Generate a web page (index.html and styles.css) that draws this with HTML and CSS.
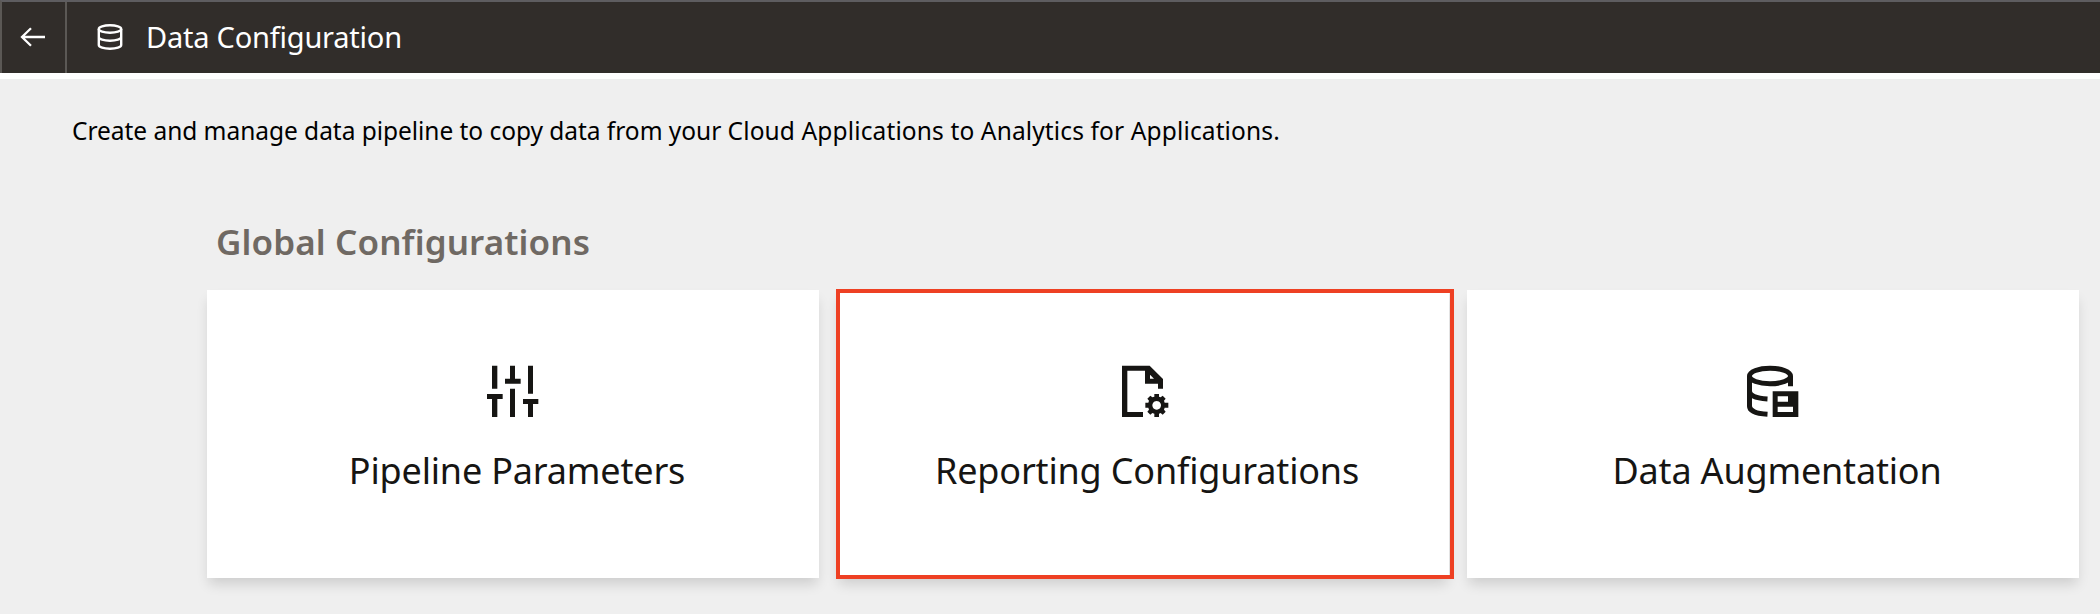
FILE: index.html
```html
<!DOCTYPE html>
<html lang="en">
<head>
<meta charset="utf-8">
<title>Data Configuration</title>
<link rel="stylesheet" href="styles.css">
</head>
<body>
<header class="topbar">
  <button class="back" aria-label="Back">
    <svg width="26" height="20" viewBox="0 0 26 20" fill="none" stroke="currentColor" stroke-width="2.3"><path d="M25 10H2M11 1.2L2 10l9 8.8"/></svg>
  </button>
  <svg class="db" width="26" height="26" viewBox="0 0 26 26" fill="none" stroke="currentColor" stroke-width="2.4"><ellipse cx="13" cy="5" rx="11.2" ry="3.7"/><path d="M1.8 5v16c0 2.2 5 3.8 11.2 3.8S24.200 23.200 24.200 21V5M1.800 13c0 2.200 5 3.800 11.200 3.800s11.200-1.600 11.200-3.800"/></svg>
  <h1 class="title">Data Configuration</h1>
</header>
<main class="page">
  <p class="intro"><span class="lead">Create and manage data pipeline to copy data from your </span>Cloud Applications to Analytics for Applications.</p>
  <h2 class="section">Global Configurations</h2>
  <div class="cards">
    <a class="card">
      <svg class="icon" viewBox="48 45 162 162"><path d="M66 47h16v69H66zM51 132h47v15H82v54H66v-54H51zM120 47h15v39h17v15h-47V86h15zM120 116h15v85h-15zM174 47h15v84h-15zM159 147h46v15h-16v39h-15v-39h-15z"/></svg>
      <span class="label">Pipeline Parameters</span>
    </a>
    <a class="card selected">
      <svg class="icon" viewBox="48 45 162 162"><path fill-rule="evenodd" d="M66 47h83l40 40v29h-15v-15h-39V62H82v124h47v15H66zM150 74v12h12z"/><path fill-rule="evenodd" d="M163 132h14v8l5 2 6-5 9 9-5 6 2 6h11v15h-11l-2 6 5 6-9 9-6-5-5 2v10h-14v-10l-6-2-6 5-9-9 5-6-2-6h-9v-15h9l2-6-5-6 9-9 6 5 6-2zM170 153a13 13 0 1 0 .01 0z"/></svg>
      <span class="label">Reporting Configurations</span>
    </a>
    <a class="card">
      <svg class="icon" viewBox="48 45 162 162"><g fill="none" stroke="#161513" stroke-width="15"><ellipse cx="120" cy="78" rx="61.500" ry="23.500"/><path d="M181.500 78v31M58.500 78v91c0 13 20 22 54 24M58.500 124c0 13 20 21 54 23"/></g><path fill-rule="evenodd" d="M128 124h77v77h-77zM143 139v16h31v-16zM143 170v16h46v-16z"/></svg>
      <span class="label">Data Augmentation</span>
    </a>
  </div>
</main>
</body>
</html>
```
FILE: styles.css
```css
* { box-sizing: border-box; }
body {
  margin: 0;
  height: 614px;
  overflow: hidden;
  background: #efefef;
  color: #161513;
  font-family: "Noto Sans", "Open Sans", sans-serif;
}
.topbar {
  display: flex;
  align-items: center;
  height: 73px;
  margin-bottom: 6px;
  border-top: 2px solid #5e5d60;
  border-left: 2px solid #5b5855;
  background: #312d2a;
  box-shadow: 0 6px 0 #fff;
  color: #fff;
}
.back {
  display: flex;
  align-items: center;
  align-self: stretch;
  width: 65px;
  padding: 0 0 2px 18px;
  border: 0;
  border-right: 2px solid #5b5855;
  background: none;
  color: inherit;
}
.db { margin: 0 0 2px 30px; }
.title {
  margin: 0 0 1px 23px;
  font-size: 29px;
  font-weight: 400;
  line-height: 40px;
  letter-spacing: -.22px;
  white-space: nowrap;
}
.page { padding-left: 72px; }
.intro {
  margin: 0;
  padding-top: 34px;
  font-size: 24.500px;
  line-height: 36px;
  letter-spacing: .13px;
  color: #000;
  white-space: nowrap;
}
.lead { letter-spacing: -.04px; }
.section {
  margin: 68px 0 0 144px;
  font-size: 35px;
  font-weight: 600;
  line-height: 50px;
  letter-spacing: .1px;
  color: #6f6963;
  white-space: nowrap;
}
.cards {
  display: grid;
  grid-template-columns: repeat(3, 612px);
  gap: 18px;
  margin: 23px 0 0 135px;
}
.card {
  position: relative;
  display: flex;
  flex-direction: column;
  align-items: center;
  height: 288px;
  padding-top: 75px;
  background: #fff;
  box-shadow: 0 8px 12px -2px rgba(0, 0, 0, .14);
}
.selected::after {
  content: "";
  position: absolute;
  inset: -1px -5px -1px -1px;
  border: 4px solid #ee4023;
}
.icon { width: 54px; height: 54px; fill: #161513; }
.label {
  margin-top: 27px;
  padding-left: 8px;
  font-size: 36px;
  line-height: 50px;
  letter-spacing: -.18px;
  white-space: nowrap;
}
```
